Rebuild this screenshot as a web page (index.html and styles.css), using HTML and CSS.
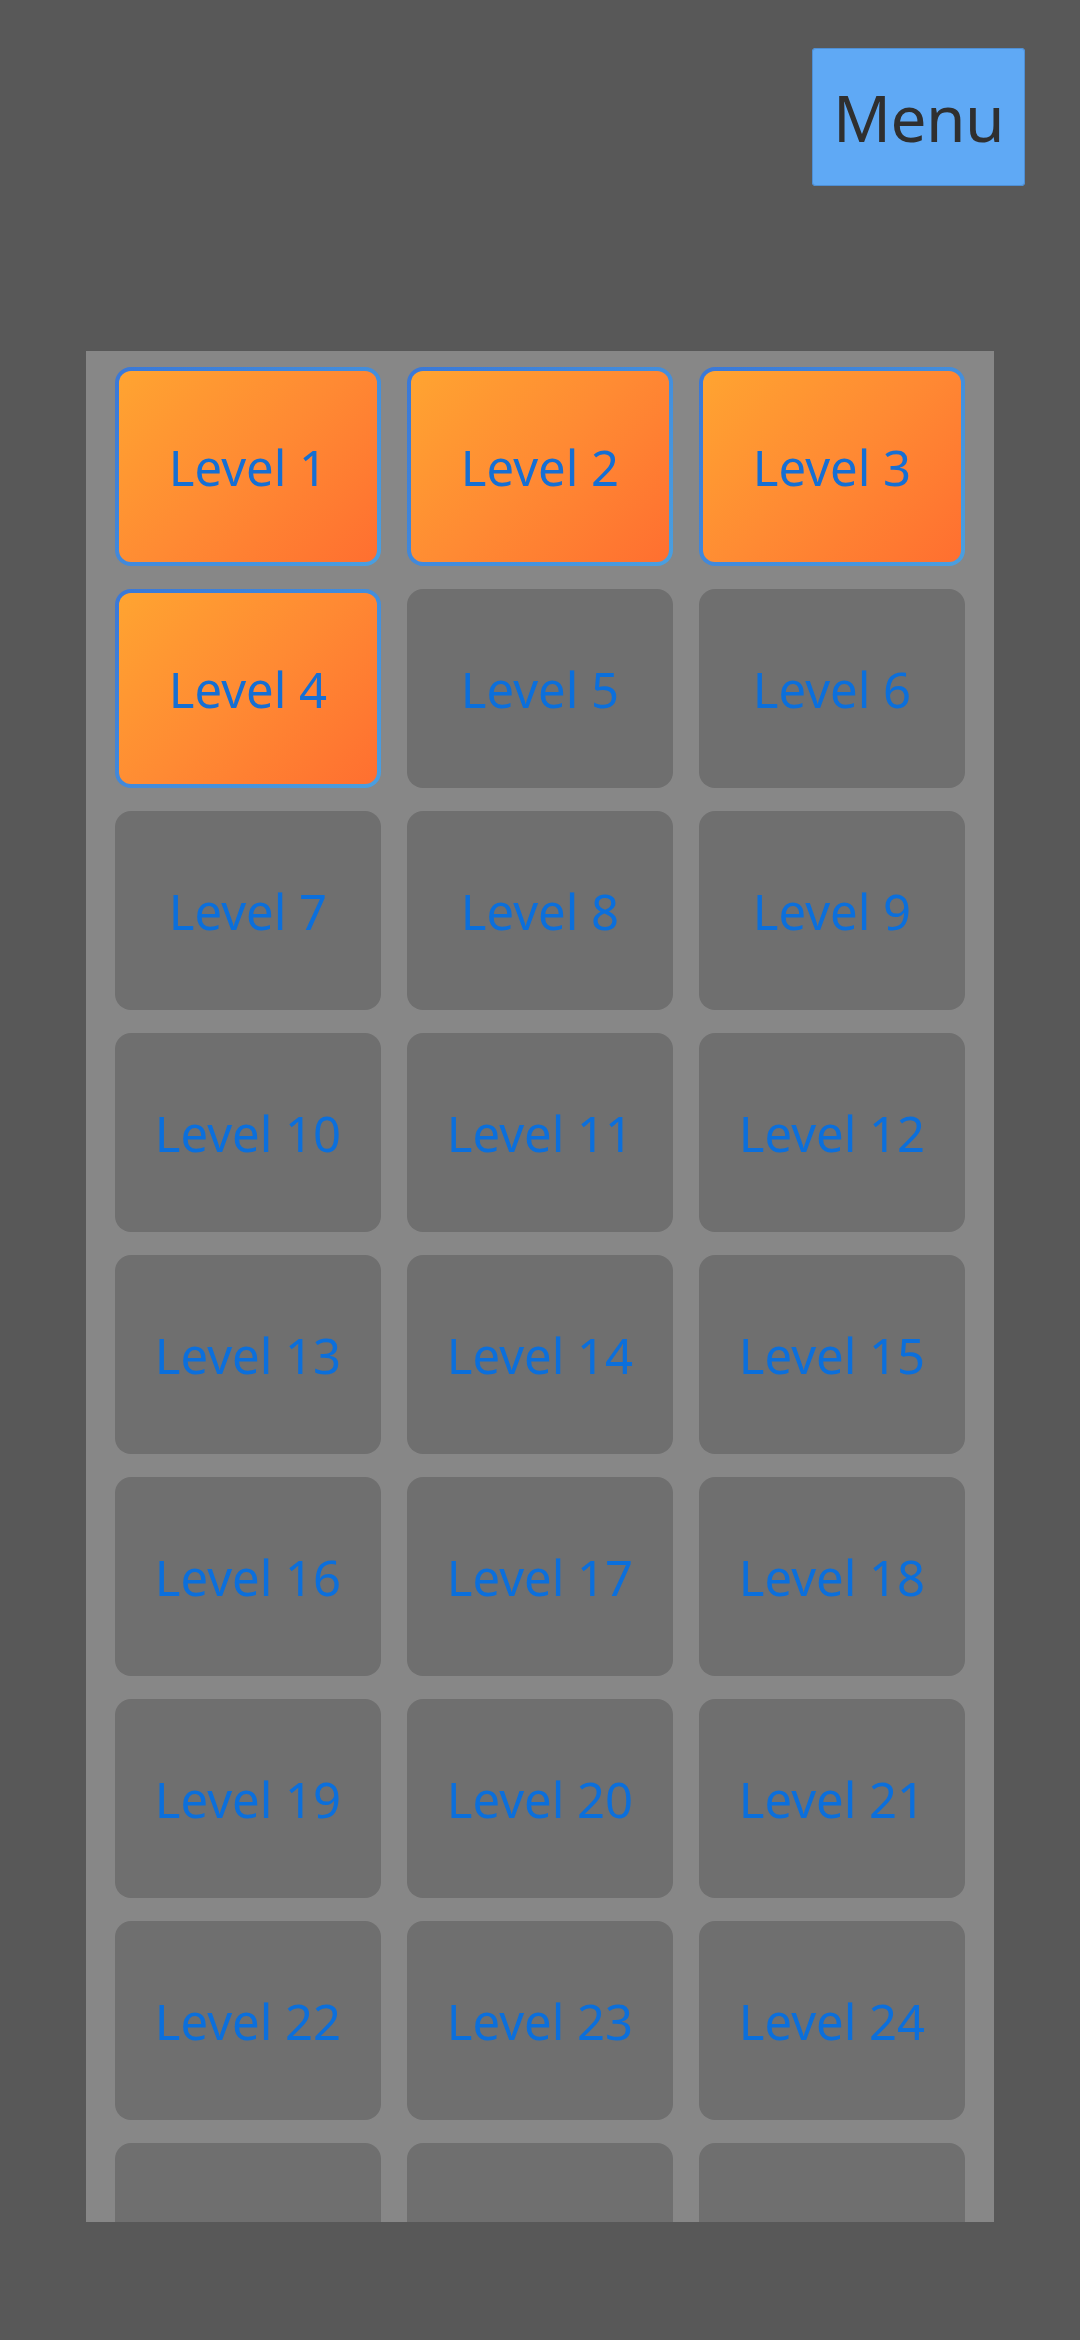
FILE: index.html
```html
<!DOCTYPE html>
<html>
<head>
<meta charset="utf-8">
<link rel="stylesheet" href="styles.css">
</head>
<body>
<div class="top">
  <button class="menu">Menu</button>
</div>
<div class="panel">
  <div class="grid">
    <div class="tile on">Level 1</div>
    <div class="tile on">Level 2</div>
    <div class="tile on">Level 3</div>
    <div class="tile on">Level 4</div>
    <div class="tile">Level 5</div>
    <div class="tile">Level 6</div>
    <div class="tile">Level 7</div>
    <div class="tile">Level 8</div>
    <div class="tile">Level 9</div>
    <div class="tile">Level 10</div>
    <div class="tile">Level 11</div>
    <div class="tile">Level 12</div>
    <div class="tile">Level 13</div>
    <div class="tile">Level 14</div>
    <div class="tile">Level 15</div>
    <div class="tile">Level 16</div>
    <div class="tile">Level 17</div>
    <div class="tile">Level 18</div>
    <div class="tile">Level 19</div>
    <div class="tile">Level 20</div>
    <div class="tile">Level 21</div>
    <div class="tile">Level 22</div>
    <div class="tile">Level 23</div>
    <div class="tile">Level 24</div>
    <div class="tile">Level 25</div>
    <div class="tile">Level 26</div>
    <div class="tile">Level 27</div>
  </div>
</div>
</body>
</html>
```
FILE: styles.css
```css
html, body {
  margin: 0;
  padding: 0;
  background: #585858;
  width: 1080px;
  height: 2340px;
  overflow: hidden;
  font-family: "Noto Sans", "Open Sans", sans-serif;
}
.top {
  display: flex;
  justify-content: flex-end;
  padding: 48px 55px 0 0;
}
.menu {
  width: 213px;
  height: 138px;
  border: none;
  border-radius: 4px;
  background: #5fa9f5;
  color: #2f2f2f;
  font-family: "Noto Sans", "Open Sans", sans-serif;
  font-size: 64px;
  letter-spacing: -0.5px;
  padding: 0;
  box-shadow: inset 0 0 0 1px #4f8fd4;
}
.panel {
  margin: 165px 0 0 86px;
  width: 908px;
  height: 1871px;
  box-sizing: border-box;
  padding: 16px 29px 0;
  background: #878787;
  overflow: hidden;
}
.grid {
  display: grid;
  grid-template-columns: repeat(3, 1fr);
  grid-auto-rows: 199px;
  column-gap: 26px;
  row-gap: 23px;
}
.tile {
  display: flex;
  align-items: center;
  justify-content: center;
  border-radius: 16px;
  background: #6f6f6f;
  color: #0b6fdc;
  font-size: 49px;
  letter-spacing: 0;
}
.tile.on {
  border: 4px solid transparent;
  background:
    linear-gradient(135deg, #ffa431 0%, #ff8a33 50%, #ff6f30 100%) padding-box,
    linear-gradient(135deg, #3a78d8 0%, #4a9fe0 100%) border-box;
  color: #156fd4;
}
```
